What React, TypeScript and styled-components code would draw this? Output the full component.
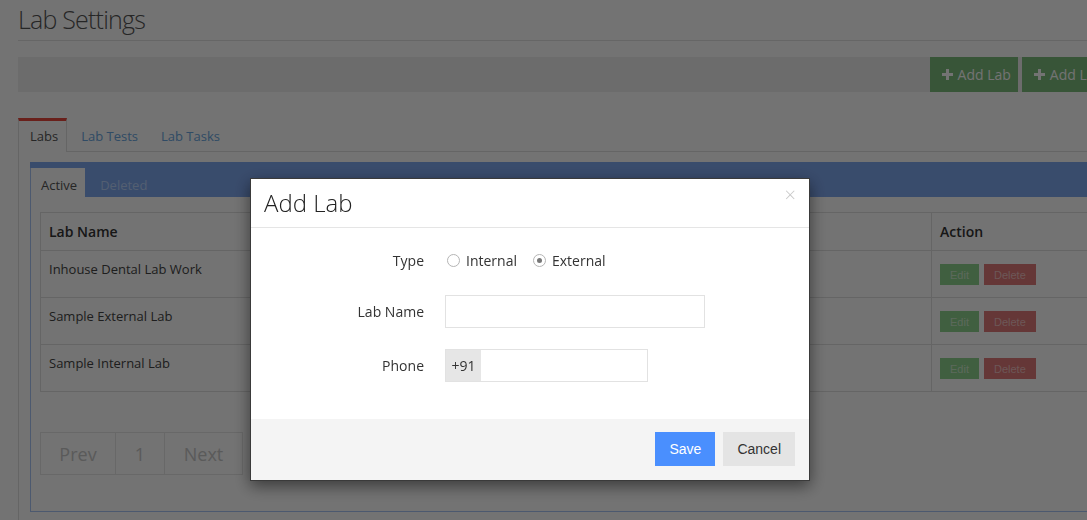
import React from "react";
import styled, { createGlobalStyle } from "styled-components";

const GlobalStyle = createGlobalStyle`
  html, body { margin: 0; padding: 0; background: #ffffff; overflow: hidden; }
  body { font-family: "Open Sans", "Noto Sans", sans-serif; color: #333; width: 1087px; height: 520px; }
  * { box-sizing: border-box; }
`;

const Page = styled.div`
  width: 1159px;
  padding: 0 18px;
`;

const Title = styled.h1`
  margin: 0;
  padding: 3px 0 4px;
  font-size: 25px;
  letter-spacing: -0.8px;
  line-height: 33px;
  font-weight: 300;
  color: #555;
  border-bottom: 1px solid #e3e3e3;
`;

const Toolbar = styled.div`
  margin-top: 16px;
  height: 35px;
  background: #efefef;
  display: flex;
  justify-content: flex-end;
  gap: 4px;
`;

const AddButton = styled.button`
  height: 35px;
  border: none;
  background: #7cbc7c;
  color: #fff;
  font-family: "Open Sans", sans-serif;
  font-size: 14px;
  padding: 0 7px 0 12px;
  display: flex;
  align-items: center;
  gap: 5px;
`;

const TabNav = styled.div`
  margin-top: 26px;
  height: 34px;
  display: flex;
  border-bottom: 1px solid #e0e0e0;
`;

const Tab = styled.div<{ $active?: boolean }>`
  height: 34px;
  padding: 0 ${(p) => (p.$active ? "8px 2px 11px" : "11px 2px 12px")};
  margin-right: ${(p) => (p.$active ? "2px" : "0")};
  font-size: 13px;
  display: flex;
  align-items: center;
  color: ${(p) => (p.$active ? "#555" : "#6aa6e0")};
  background: ${(p) => (p.$active ? "#fff" : "transparent")};
  border-top: 3px solid ${(p) => (p.$active ? "#e8483c" : "transparent")};
  border-left: ${(p) => (p.$active ? "1px solid #e0e0e0" : "none")};
  border-right: ${(p) => (p.$active ? "1px solid #e0e0e0" : "none")};
  margin-bottom: -1px;
`;

const TabBody = styled.div`
  border-left: 1px solid #e0e0e0;
  padding: 10px 0 0 11px;
  height: 400px;
`;

const Panel = styled.div`
  border: 1px solid #a9c6f5;
  border-top: none;
  height: 350px;
`;

const PanelHead = styled.div`
  height: 35px;
  background: #7fa8f0;
  display: flex;
  align-items: flex-end;
  margin-left: -1px;
`;

const SubTab = styled.div<{ $active?: boolean }>`
  height: 30px;
  margin-bottom: -1px;
  padding: 4px ${(p) => (p.$active ? "8px 0 10px" : "11px 0 15px")};
  display: flex;
  align-items: center;
  font-size: 13px;
  color: ${(p) => (p.$active ? "#555" : "#b9d2fb")};
  background: ${(p) => (p.$active ? "#fff" : "transparent")};
  border-left: ${(p) => (p.$active ? "1px solid #a9c6f5" : "none")};
`;

const PanelBody = styled.div`
  padding: 15px 10px 0 9px;
`;

const Table = styled.table`
  width: 1060px;
  border-collapse: collapse;
  border: 1px solid #e0e0e0;
  font-size: 13px;
`;

const Th = styled.th<{ $w?: number }>`
  text-align: left;
  font-weight: 600;
  font-size: 14px;
  color: #333;
  height: 38px;
  padding: 0 8px;
  border: 1px solid #e0e0e0;
  width: ${(p) => (p.$w ? `${p.$w}px` : "auto")};
`;

const Td = styled.td`
  height: 47px;
  padding: 9px 8px 0;
  vertical-align: top;
  color: #444;
  border: 1px solid #e0e0e0;
`;

const ActionCell = styled(Td)`
  padding-top: 13px;
`;

const SmallBtn = styled.button<{ $kind: "edit" | "delete" }>`
  height: 21px;
  border: none;
  padding: 0 10px;
  margin-right: 5px;
  font-family: "Liberation Sans", Arial, sans-serif;
  font-size: 11px;
  color: rgba(255, 255, 255, 0.55);
  background: ${(p) => (p.$kind === "edit" ? "#8fd28f" : "#e07a7a")};
`;

const Pager = styled.div`
  margin-top: 40px;
  display: inline-flex;
  border: 1px solid #e6e6e6;
  height: 43px;
`;

const PageItem = styled.div<{ $w: number }>`
  width: ${(p) => p.$w}px;
  display: flex;
  align-items: center;
  justify-content: center;
  font-size: 18px;
  color: #c8c8c8;
  border-left: 1px solid #e6e6e6;
  &:first-child { border-left: none; }
`;

const Overlay = styled.div`
  position: fixed;
  inset: 0;
  background: rgba(0, 0, 0, 0.55);
`;

const Modal = styled.div`
  position: fixed;
  left: 250px;
  top: 178px;
  width: 560px;
  background: #fff;
  border: 1px solid #3a3a3a;
  box-shadow: 0 5px 15px rgba(0, 0, 0, 0.5);
`;

const ModalHeader = styled.div`
  height: 49px;
  border-bottom: 1px solid #e5e5e5;
  display: flex;
  align-items: center;
  justify-content: space-between;
  padding: 0 14px 0 13px;
`;

const ModalTitle = styled.h4`
  margin: 0;
  font-size: 24px;
  font-weight: 300;
  color: #222;
  line-height: 30px;
`;

const Close = styled.span`
  font-size: 20px;
  color: #c8c8c8;
  line-height: 1;
  align-self: flex-start;
  margin-top: 6px;
  margin-right: -1px;
  font-weight: 300;
`;

const ModalBody = styled.div`
  padding: 16px 0 37px;
  display: flex;
  flex-direction: column;
  gap: 21px;
`;

const FormRow = styled.div<{ $h: number }>`
  display: grid;
  grid-template-columns: 173px 1fr;
  column-gap: 21px;
  align-items: center;
  height: ${(p) => p.$h}px;
`;

const Label = styled.label`
  text-align: right;
  font-size: 14px;
  color: #333;
`;

const Radios = styled.div`
  display: flex;
  align-items: center;
  padding-left: 2px;
  padding-top: 2px;
  font-size: 14px;
  color: #333;
`;

const TypeLabel = styled(Label)`
  padding-top: 2px;
`;

const RadioItem = styled.span`
  display: inline-flex;
  align-items: center;
  gap: 6px;
  margin-right: 16px;
`;

const RadioCircle = styled.span<{ $checked?: boolean }>`
  width: 13px;
  height: 13px;
  border-radius: 50%;
  border: 1px solid #b5b5b5;
  display: inline-flex;
  align-items: center;
  justify-content: center;
  &::after {
    content: "";
    width: 5px;
    height: 5px;
    border-radius: 50%;
    background: ${(p) => (p.$checked ? "#777" : "transparent")};
  }
`;

const TextInput = styled.input<{ $w: number }>`
  width: ${(p) => p.$w}px;
  height: 33px;
  border: 1px solid #e2e2e2;
  outline: none;
  padding: 0 10px;
  font-size: 14px;
`;

const InputGroup = styled.div`
  display: flex;
  width: 203px;
  height: 33px;
  border: 1px solid #e2e2e2;
`;

const Addon = styled.span`
  width: 35px;
  background: #e6e6e6;
  display: flex;
  align-items: center;
  justify-content: center;
  font-size: 14px;
  color: #333;
`;

const BareInput = styled.input`
  flex: 1;
  border: none;
  outline: none;
  min-width: 0;
`;

const ModalFooter = styled.div`
  background: #f4f4f4;
  padding: 13px 14px 14px;
  display: flex;
  justify-content: flex-end;
  gap: 8px;
`;

const FooterBtn = styled.button<{ $primary?: boolean }>`
  height: 34px;
  border: none;
  padding: 0 14px;
  font-family: "Liberation Sans", Arial, sans-serif;
  font-size: 14px;
  background: ${(p) => (p.$primary ? "#4a8ffe" : "#e4e4e4")};
  color: ${(p) => (p.$primary ? "#fff" : "#333")};
`;

const Plus = () => (
  <svg width="11" height="11" viewBox="0 0 11 11">
    <path d="M4 0h3v4h4v3H7v4H4V7H0V4h4z" fill="currentColor" />
  </svg>
);

const rows = ["Inhouse Dental Lab Work", "Sample External Lab", "Sample Internal Lab"];

export default function App() {
  return (
    <>
      <GlobalStyle />
      <Page>
        <Title>Lab Settings</Title>
        <Toolbar>
          <AddButton><Plus />Add Lab</AddButton>
          <AddButton><Plus />Add Lab Test</AddButton>
        </Toolbar>
        <TabNav>
          <Tab $active>Labs</Tab>
          <Tab>Lab Tests</Tab>
          <Tab>Lab Tasks</Tab>
        </TabNav>
        <TabBody>
          <Panel>
            <PanelHead>
              <SubTab $active>Active</SubTab>
              <SubTab>Deleted</SubTab>
            </PanelHead>
            <PanelBody>
              <Table>
                <thead>
                  <tr>
                    <Th $w={421}>Lab Name</Th>
                    <Th $w={230}>Type</Th>
                    <Th $w={240}>Phone</Th>
                    <Th>Action</Th>
                  </tr>
                </thead>
                <tbody>
                  {rows.map((r) => (
                    <tr key={r}>
                      <Td>{r}</Td>
                      <Td></Td>
                      <Td></Td>
                      <ActionCell>
                        <SmallBtn $kind="edit">Edit</SmallBtn>
                        <SmallBtn $kind="delete">Delete</SmallBtn>
                      </ActionCell>
                    </tr>
                  ))}
                </tbody>
              </Table>
              <Pager>
                <PageItem $w={74}>Prev</PageItem>
                <PageItem $w={49}>1</PageItem>
                <PageItem $w={78}>Next</PageItem>
              </Pager>
            </PanelBody>
          </Panel>
        </TabBody>
      </Page>
      <Overlay />
      <Modal>
        <ModalHeader>
          <ModalTitle>Add Lab</ModalTitle>
          <Close>×</Close>
        </ModalHeader>
        <ModalBody>
          <FormRow $h={30}>
            <TypeLabel>Type</TypeLabel>
            <Radios>
              <RadioItem><RadioCircle />Internal</RadioItem>
              <RadioItem><RadioCircle $checked />External</RadioItem>
            </Radios>
          </FormRow>
          <FormRow $h={33}>
            <Label>Lab Name</Label>
            <TextInput $w={260} />
          </FormRow>
          <FormRow $h={33}>
            <Label>Phone</Label>
            <InputGroup>
              <Addon>+91</Addon>
              <BareInput />
            </InputGroup>
          </FormRow>
        </ModalBody>
        <ModalFooter>
          <FooterBtn $primary>Save</FooterBtn>
          <FooterBtn>Cancel</FooterBtn>
        </ModalFooter>
      </Modal>
    </>
  );
}
